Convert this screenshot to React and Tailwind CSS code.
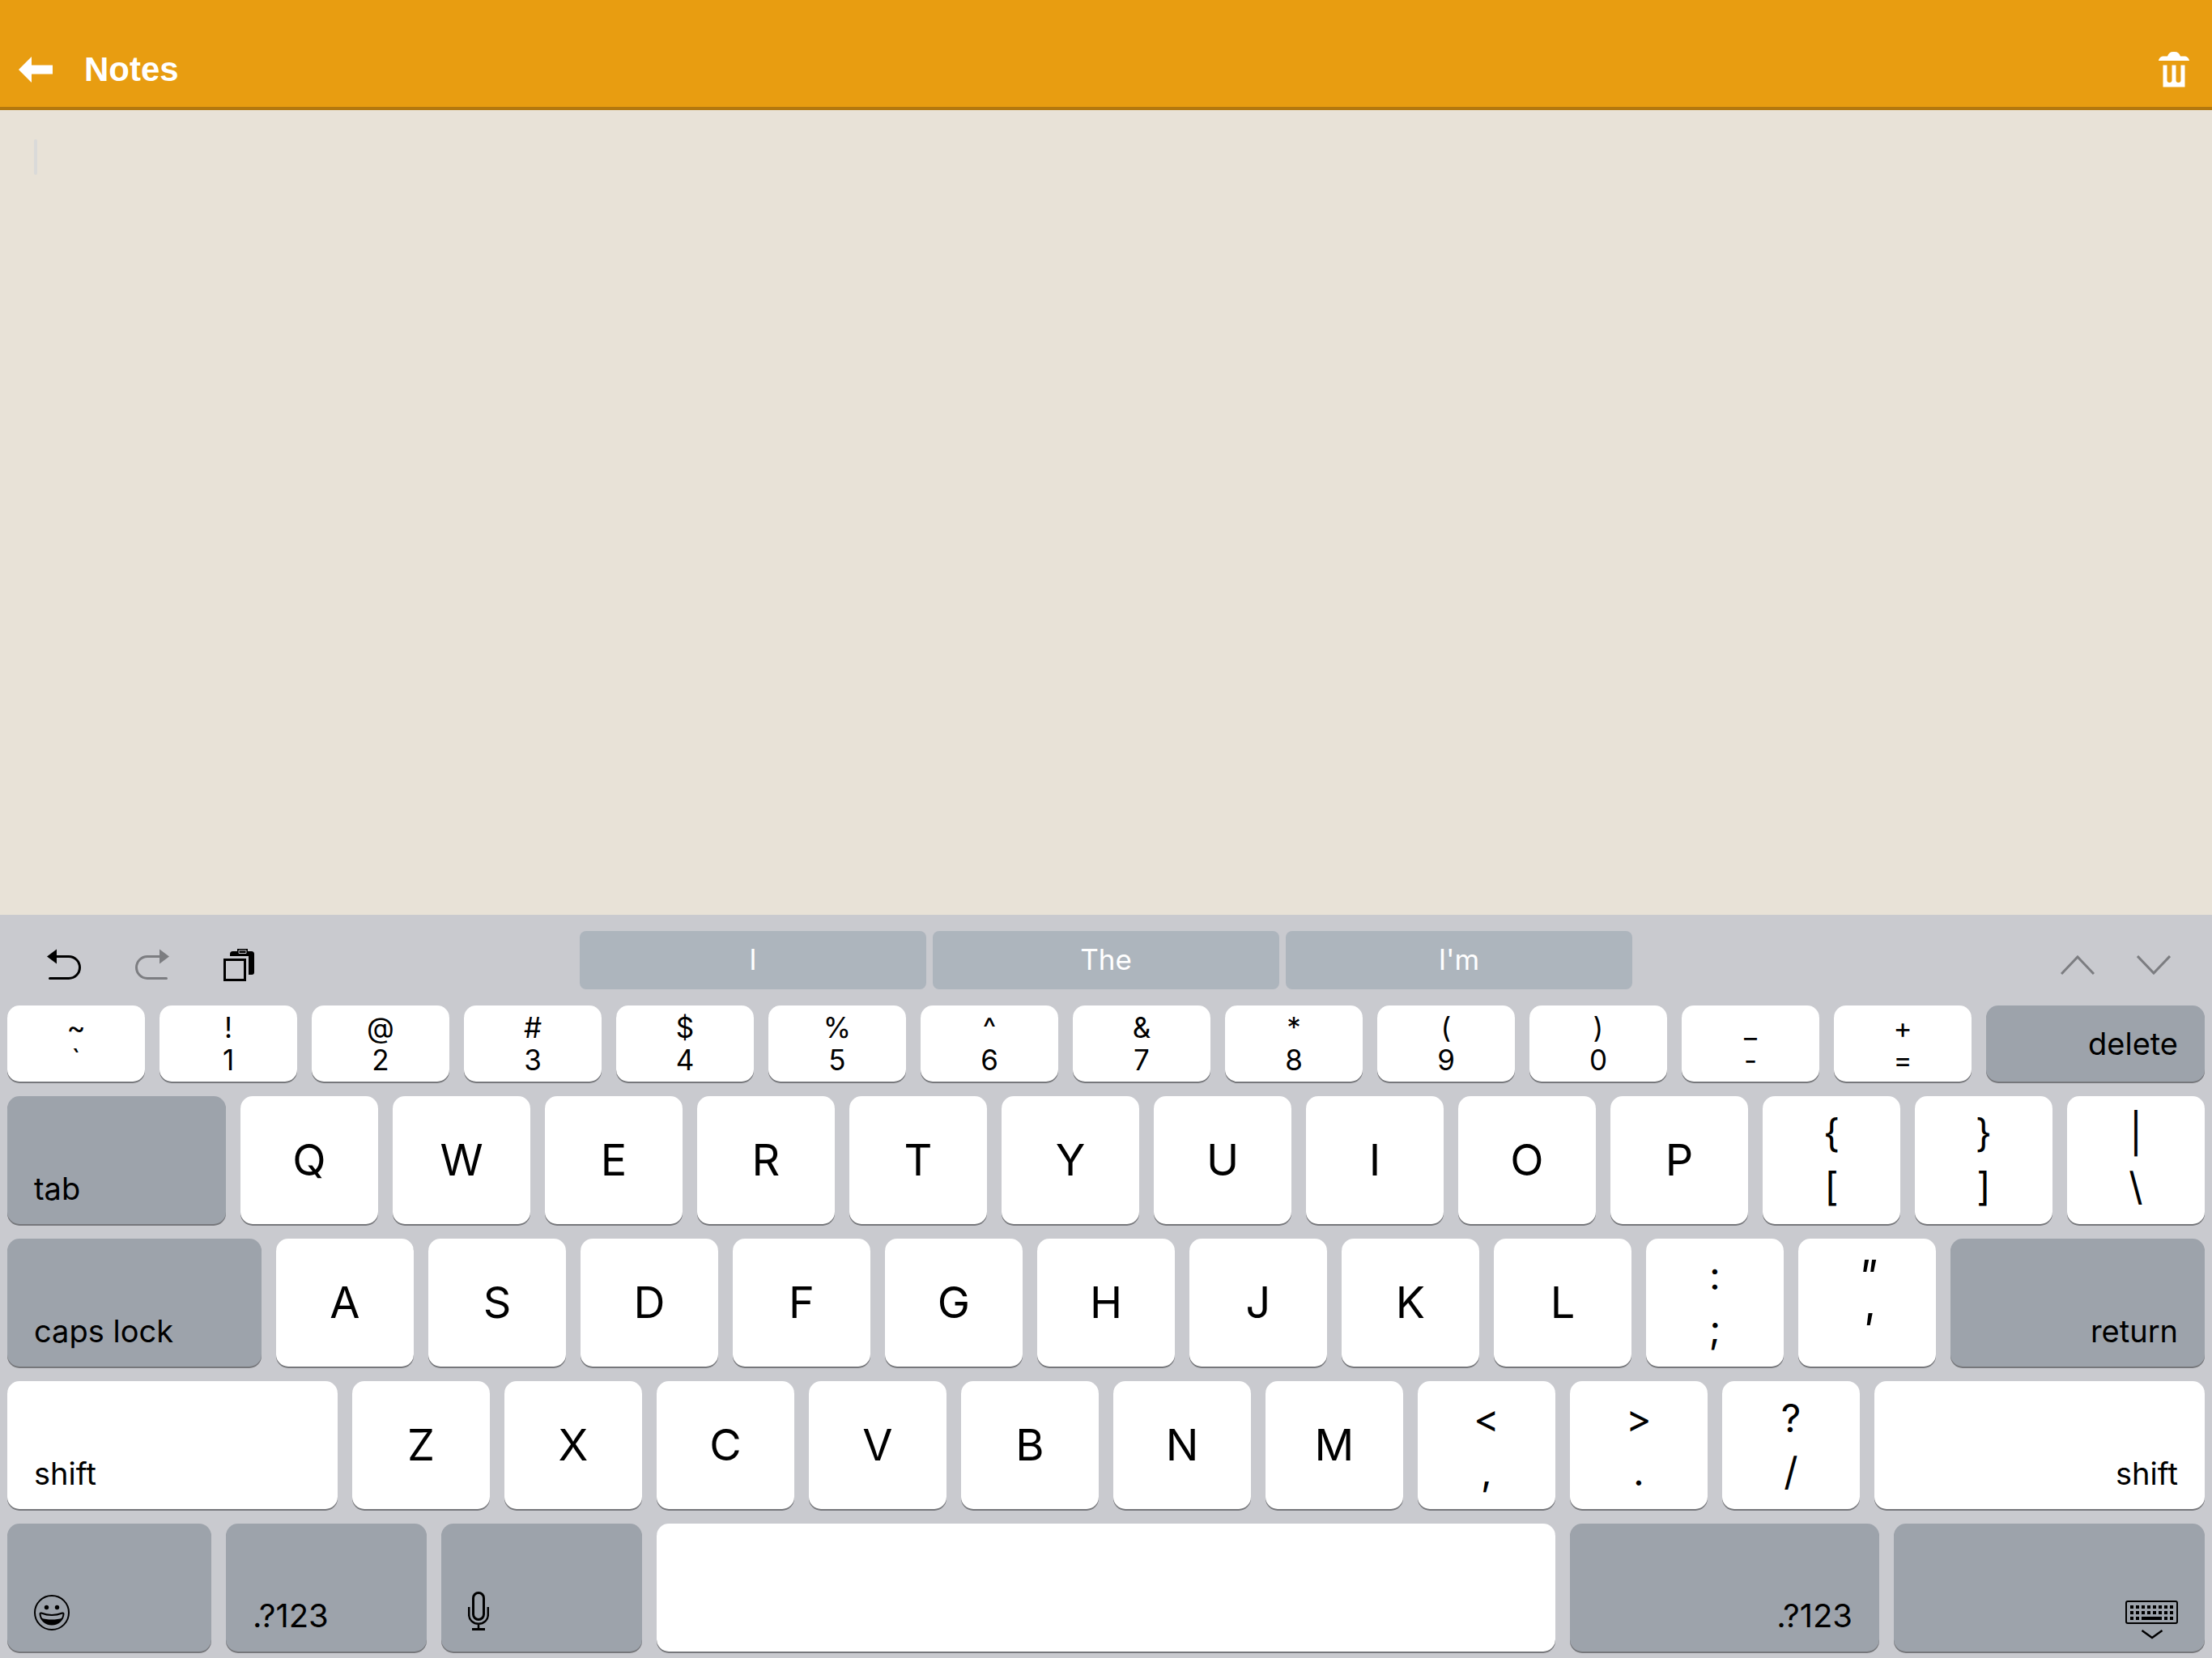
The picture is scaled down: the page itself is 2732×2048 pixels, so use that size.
const letters = (text) => text.split("");

const numberRow = [
  ["~", "`"], ["!", "1"], ["@", "2"], ["#", "3"], ["$", "4"], ["%", "5"], ["^", "6"],
  ["&", "7"], ["*", "8"], ["(", "9"], [")", "0"], ["_", "-"], ["+", "="],
];

const KEY = "flex min-w-0 basis-0 rounded-[15px] text-black shadow-[0_2px_0_#76777b]";

function LetterKey({ label }) {
  return (
    <button type="button" className={`${KEY} grow-[170] items-center justify-center bg-white text-[54px] leading-none`}>
      {label}
    </button>
  );
}

function SmallDualKey({ upper, lower }) {
  return (
    <button type="button" className={`${KEY} grow-[170] flex-col items-center justify-center bg-white text-[35px] leading-[40px]`}>
      <span>{upper}</span>
      <span>{lower}</span>
    </button>
  );
}

function DualKey({ upper, lower, style = "text-[48px]" }) {
  return (
    <button type="button" className={`${KEY} grow-[170] flex-col items-center justify-center bg-white ${style}`}>
      <span className="leading-[66px]">{upper}</span>
      <span className="leading-[66px]">{lower}</span>
    </button>
  );
}

function WideKey({ grow, tone = "bg-[#9da3ab]", align = "items-end justify-start", inset = "pb-[20px]", size = "text-[38px]", label, children }) {
  return (
    <button type="button" aria-label={label} className={`${KEY} ${grow} ${tone} ${align}`}>
      <span className={`mx-[33px] ${size} leading-[48px] ${inset}`}>{children}</span>
    </button>
  );
}

function BackArrow() {
  return (
    <svg width="42" height="32" viewBox="0 0 42 32" fill="currentColor" aria-hidden="true">
      <path d="M0 16 16 0v10.500h26v11H16V32z" />
    </svg>
  );
}

function TrashIcon() {
  return (
    <svg width="38" height="44" viewBox="0 0 38 44" fill="currentColor" aria-hidden="true">
      <path d="M0 11C.5 7.500 3 5.500 6.500 5.500h4.500C12 2 14.500 0 18 0h2c3.500 0 6 2 7 5.500h4.500c3.500 0 6 2 6.500 5.500z" />
      <path d="M5.500 16.500h5v18.500a3 3 0 0 0 6 0V16.500h5V35a3 3 0 0 0 6 0V16.500h5v27h-27z" />
    </svg>
  );
}

function UndoIcon({ flipped }) {
  return (
    <svg width="42" height="40" viewBox="0 0 42 40" fill="none" aria-hidden="true">
      <g transform={flipped ? "translate(42 0) scale(-1 1)" : undefined}>
        <path d="M0 9.500 12 .5v18z" fill="currentColor" />
        <path d="M10 9.500h17a13.500 13.500 0 0 1 0 27H3.500" stroke="currentColor" strokeWidth="3" strokeLinecap="round" />
      </g>
    </svg>
  );
}

function PasteIcon() {
  return (
    <svg width="38" height="40" viewBox="0 0 38 40" fill="none" aria-hidden="true">
      <path d="M8 9V6.500Q8 3 11.500 3H17V0h13v3h4.500Q38 3 38 6.500V29q0 3-3 3h-4V9z" fill="currentColor" />
      <path d="M19 2h9v3.500h-9z" stroke="#c9cacf" strokeWidth="1" />
      <path d="M1.500 13.500h25v25h-25z" stroke="currentColor" strokeWidth="3" />
    </svg>
  );
}

function Chevron({ down }) {
  return (
    <svg width="42" height="24" viewBox="0 0 42 24" fill="none" stroke="currentColor" strokeWidth="3" aria-hidden="true">
      <path d={down ? "M1 1 21 22 41 1" : "M1 23 21 2 41 23"} />
    </svg>
  );
}

function EmojiIcon() {
  return (
    <svg className="block" width="44" height="44" viewBox="0 0 44 44" fill="none" aria-hidden="true">
      <circle cx="22" cy="22" r="21" stroke="currentColor" strokeWidth="2" />
      <circle cx="15.500" cy="15.500" r="2.700" fill="currentColor" />
      <circle cx="28.500" cy="15.500" r="2.700" fill="currentColor" />
      <path d="M7.500 23.500c0-.8.600-1.200 1.500-1 8 3 18 3 26 0 .9-.2 1.500.2 1.500 1C36 31 30 36.500 22 36.500S8 31 7.500 23.500z" stroke="currentColor" strokeWidth="2" />
      <path d="M9 28.500c7 2.800 19 2.800 26 0-2 5-7 8-13 8s-11-3-13-8z" fill="currentColor" />
    </svg>
  );
}

function MicIcon() {
  return (
    <svg className="block" width="26" height="48" viewBox="0 0 26 48" fill="none" stroke="currentColor" aria-hidden="true">
      <rect x="6.500" y="1.500" width="13" height="33" rx="6.500" strokeWidth="3" />
      <path d="M1.200 19v9.500c0 6.500 5.300 11.300 11.800 11.300s11.800-4.800 11.800-11.300V19M13 40v6" strokeWidth="2.500" />
      <path d="M5 46.500h16" strokeWidth="3" />
    </svg>
  );
}

function HideKeyboardIcon() {
  const columns = [6, 13, 20, 27, 34, 41, 48, 55];
  return (
    <svg className="block" width="65" height="48" viewBox="0 0 65 48" fill="none" stroke="currentColor" aria-hidden="true">
      <rect x="1" y="1" width="63" height="27" rx="2" strokeWidth="2" />
      <g fill="currentColor" stroke="none">
        {columns.map((x) => (
          <g key={x}>
            <rect x={x} y="6" width="4" height="4" />
            <rect x={x} y="13" width="4" height="4" />
          </g>
        ))}
        <rect x="6" y="20" width="4" height="4" />
        <rect x="13" y="20" width="4" height="4" />
        <rect x="20" y="20" width="25" height="4" />
        <rect x="48" y="20" width="4" height="4" />
        <rect x="55" y="20" width="4" height="4" />
      </g>
      <path d="M20.500 37 33 46l12.500-9" strokeWidth="2.500" />
    </svg>
  );
}

function Toolbar() {
  return (
    <div className="grid h-[112px] grid-cols-[716fr_1300fr_716fr] items-start">
      <div className="flex gap-[67px] pt-[42px] pl-[58px]">
        <button type="button" aria-label="Undo" className="text-black"><UndoIcon /></button>
        <button type="button" aria-label="Redo" className="text-[#7c7d81]"><UndoIcon flipped /></button>
        <button type="button" aria-label="Paste" className="text-black"><PasteIcon /></button>
      </div>
      <div className="flex gap-[8px] pt-[20px]">
        {["I", "The", "I'm"].map((word) => (
          <button key={word} type="button" className="h-[72px] flex-1 rounded-[8px] bg-[#adb5bd] pb-[2px] text-[35px] leading-[70px] text-white">
            {word}
          </button>
        ))}
      </div>
      <div className="flex justify-end gap-[52px] pt-[50px] pr-[51px] text-[#7c7d81]">
        <button type="button" aria-label="Previous field"><Chevron /></button>
        <button type="button" aria-label="Next field"><Chevron down /></button>
      </div>
    </div>
  );
}

function Row({ height = "h-[158px]", children }) {
  return <div className={`flex gap-[18px] ${height}`}>{children}</div>;
}

function Keyboard() {
  return (
    <section aria-label="Keyboard" className="bg-[#c9cacf] font-['Inter','Liberation_Sans',sans-serif]">
      <Toolbar />
      <div className="flex flex-col gap-[18px] px-[9px] pb-[8px]">
        <Row height="h-[94px]">
          {numberRow.map(([upper, lower]) => <SmallDualKey key={lower} upper={upper} lower={lower} />)}
          <WideKey grow="grow-[270]" align="items-center justify-end" inset="pb-0">delete</WideKey>
        </Row>
        <Row>
          <WideKey grow="grow-[270]">tab</WideKey>
          {letters("QWERTYUIOP").map((k) => <LetterKey key={k} label={k} />)}
          <DualKey upper="{" lower="[" />
          <DualKey upper="}" lower="]" />
          <DualKey upper="|" lower="\" />
        </Row>
        <Row>
          <WideKey grow="grow-[314]">caps lock</WideKey>
          {letters("ASDFGHJKL").map((k) => <LetterKey key={k} label={k} />)}
          <DualKey upper=":" lower=";" />
          <DualKey upper={'"'} lower="'" style="text-[54px] italic" />
          <WideKey grow="grow-[314]" align="items-end justify-end">return</WideKey>
        </Row>
        <Row>
          <WideKey grow="grow-[408]" tone="bg-white">shift</WideKey>
          {letters("ZXCVBNM").map((k) => <LetterKey key={k} label={k} />)}
          <DualKey upper="<" lower="," />
          <DualKey upper=">" lower="." />
          <DualKey upper="?" lower="/" />
          <WideKey grow="grow-[408]" tone="bg-white" align="items-end justify-end">shift</WideKey>
        </Row>
        <Row>
          <WideKey grow="grow-[252]" inset="pb-[26px]" label="Emoji"><EmojiIcon /></WideKey>
          <WideKey grow="grow-[248]" size="text-[40px]">.?123</WideKey>
          <WideKey grow="grow-[248]" inset="pb-[26px]" label="Dictate"><MicIcon /></WideKey>
          <button type="button" aria-label="Space" className={`${KEY} grow-[1110] bg-white`} />
          <WideKey grow="grow-[382]" align="items-end justify-end" size="text-[40px]">.?123</WideKey>
          <WideKey grow="grow-[384]" align="items-end justify-end" inset="pb-[15px]" label="Hide keyboard"><HideKeyboardIcon /></WideKey>
        </Row>
      </div>
    </section>
  );
}

export default function App() {
  return (
    <div className="flex min-h-screen flex-col bg-[#e8e2d7]">
      <header className="flex items-center border-b-4 border-[#b3780f] bg-[#e89d11] px-[23px] pt-[50px] pb-[10px] text-white">
        <button type="button" aria-label="Back" className="mr-[39px]"><BackArrow /></button>
        <h1 className="flex-1 font-['Liberation_Sans',Arial,sans-serif] text-[42px] leading-[72px] font-bold">Notes</h1>
        <button type="button" aria-label="Delete note" className="mr-[5px]"><TrashIcon /></button>
      </header>
      <main className="flex flex-1 px-[42px] pt-[36px]">
        <span className="h-[44px] w-[4px] rounded-[2px] bg-[#dadad9]" />
        <textarea aria-label="Note text" className="flex-1 resize-none bg-transparent text-[38px] leading-[44px] outline-none" />
      </main>
      <Keyboard />
    </div>
  );
}
